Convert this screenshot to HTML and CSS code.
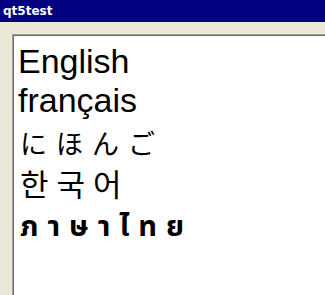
FILE: index.html
```html
<!DOCTYPE html>
<html lang="en">
  <head>
    <meta charset="UTF-8" />
    <title>qt5test</title>
    <link rel="stylesheet" href="styles.css">
  </head>
  <body>
    <div class="window">
      <div class="titlebar">qt5test</div>
      <div class="client">
        <div class="panel">
          <div class="line latin">English</div>
          <div class="line latin">français</div>
          <div class="line ja" lang="ja">にほんご</div>
          <div class="line ko" lang="ko">한국어</div>
          <div class="line th" lang="th">ภาษาไทย</div>
        </div>
      </div>
    </div>
  </body>
</html>
```

FILE: styles.css
```css
* {
  box-sizing: border-box;
}

body {
  margin: 0;
  width: 325px;
  height: 295px;
  overflow: hidden;
  background: #ece9d8;
  font-family: "Liberation Sans", Arial, sans-serif;
}

.window {
  display: flex;
  flex-direction: column;
  height: 100%;
}

.titlebar {
  height: 22px;
  padding: 4px 0 0 3px;
  background: #000080;
  color: #fff;
  font-family: "DejaVu Sans", sans-serif;
  font-size: 12px;
  font-weight: bold;
  line-height: 14px;
  -webkit-font-smoothing: none;
}

.client {
  flex: 1;
  display: flex;
  padding: 12px 0 0 12px;
}

.panel {
  flex: 1;
  background: #fff;
  border-top: 1px solid #a0a0a0;
  border-left: 1px solid #a0a0a0;
  box-shadow: inset 1px 1px 0 #696969;
  padding: 7px 0 0 5px;
  color: #000;
  -webkit-font-smoothing: none;
}

.line {
  white-space: nowrap;
}

.latin {
  font-size: 34px;
  line-height: 39px;
}

.ja {
  font-family: "Noto Sans CJK JP", sans-serif;
  font-size: 27px;
  line-height: 42px;
  letter-spacing: 9px;
  padding: 2px 0 0 2px;
}

.ko {
  font-family: "Noto Sans CJK KR", sans-serif;
  font-size: 31px;
  line-height: 38px;
  letter-spacing: 8px;
  padding-left: 2px;
}

.th {
  font-family: "Noto Sans Thai", "DejaVu Sans", sans-serif;
  font-size: 29px;
  font-weight: bold;
  line-height: 40px;
  letter-spacing: 9px;
  padding: 5px 0 0 2px;
}
```
